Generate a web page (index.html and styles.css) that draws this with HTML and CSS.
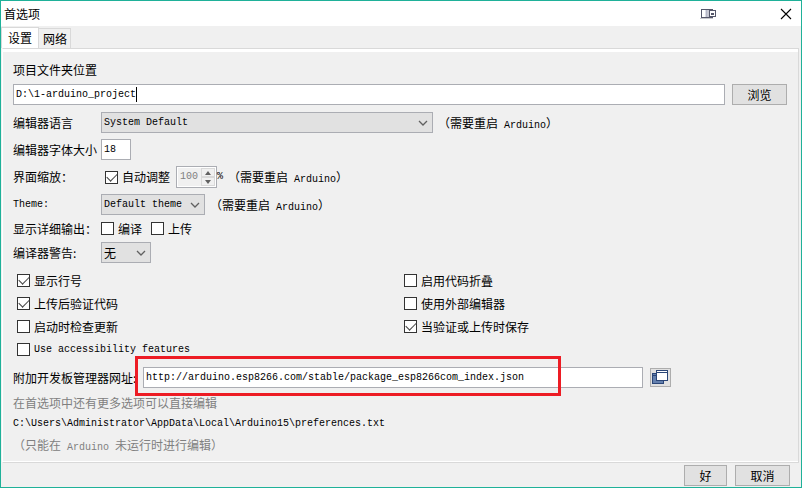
FILE: index.html
```html
<!DOCTYPE html>
<html lang="zh-CN">
<head>
<meta charset="utf-8">
<title>首选项</title>
<link rel="stylesheet" href="styles.css">
</head>
<body>
<main class="window">
  <header class="titlebar">
    <h1 class="title">首选项</h1>
    <svg class="dock-icon" width="16" height="11" viewBox="0 0 16 11" aria-hidden="true">
      <path d="M0 10.5h13" stroke="#c9c9cd"/>
      <rect x="1.5" y="1.5" width="11" height="8" fill="#fff" stroke="#55576a"/>
      <path d="M5.5 2v7" stroke="#dcdde6"/><path d="M6.5 2v7" stroke="#b4b6c6"/><path d="M8 2v7" stroke="#8d90a5"/>
      <rect x="9.5" y="2.5" width="6" height="6" fill="#fff" stroke="#55576a"/>
      <path d="M11 5h3v2h-3z" fill="#55576a"/>
    </svg>
    <button class="close" type="button" aria-label="关闭">
      <svg width="12" height="12" viewBox="0 0 12 12"><path d="M1 1l10 10M11 1L1 11" stroke="#000" stroke-width="1.1"/></svg>
    </button>
  </header>

  <nav class="tabs" role="tablist">
    <button class="tab active" type="button" role="tab" aria-selected="true">设置</button>
    <button class="tab" type="button" role="tab" aria-selected="false">网络</button>
  </nav>

  <form class="panel" id="prefs">
    <div class="row heading"><label for="path">项目文件夹位置</label></div>
    <div class="row path-row">
      <div class="path-field">
        <input class="field" id="path" type="text" value="D:\1-arduino_project">
        <span class="caret"></span>
      </div>
      <button class="btn browse" type="button">浏览</button>
    </div>

    <div class="row">
      <label class="name" for="language">编辑器语言</label>
      <span class="select wide">
        <select id="language"><option>System Default</option></select>
        <svg width="10" height="6" viewBox="0 0 10 6"><path d="M1 1l4 4 4-4"/></svg>
      </span>
      <span class="hint">（需要重启<span class="latin"> Arduino</span>）</span>
    </div>

    <div class="row">
      <label class="name" for="size">编辑器字体大小</label>
      <input class="field size" id="size" type="text" value="18">
    </div>

    <div class="row scale-row">
      <span class="name">界面缩放：</span>
      <label class="check indent"><input type="checkbox" checked>自动调整</label>
      <span class="spinner">
        <input type="text" value="100" aria-label="界面缩放" disabled>
        <span class="steps">
          <button type="button" aria-label="增加" disabled><svg width="6" height="4" viewBox="0 0 6 4"><path d="M3 0l3 4H0z"/></svg></button>
          <button type="button" aria-label="减少" disabled><svg width="6" height="4" viewBox="0 0 6 4"><path d="M0 0h6L3 4z"/></svg></button>
        </span>
      </span>
      <span class="latin">%</span>
      <span class="hint">（需要重启<span class="latin"> Arduino</span>）</span>
    </div>

    <div class="row">
      <label class="name latin" for="theme">Theme:</label>
      <span class="select theme">
        <select id="theme"><option>Default theme</option></select>
        <svg width="10" height="6" viewBox="0 0 10 6"><path d="M1 1l4 4 4-4"/></svg>
      </span>
      <span class="hint">（需要重启<span class="latin"> Arduino</span>）</span>
    </div>

    <div class="row verbose">
      <span class="name">显示详细输出：</span>
      <label class="check"><input type="checkbox">编译</label>
      <label class="check"><input type="checkbox">上传</label>
    </div>

    <div class="row">
      <label class="name" for="warnings">编译器警告:</label>
      <span class="select warnings">
        <select id="warnings"><option>无</option></select>
        <svg width="10" height="6" viewBox="0 0 10 6"><path d="M1 1l4 4 4-4"/></svg>
      </span>
    </div>

    <div class="options">
      <label class="check"><input type="checkbox" checked>显示行号</label>
      <label class="check"><input type="checkbox">启用代码折叠</label>
      <label class="check"><input type="checkbox" checked>上传后验证代码</label>
      <label class="check"><input type="checkbox">使用外部编辑器</label>
      <label class="check"><input type="checkbox">启动时检查更新</label>
      <label class="check"><input type="checkbox" checked>当验证或上传时保存</label>
      <label class="check"><input type="checkbox"><span class="latin">Use accessibility features</span></label>
    </div>

    <div class="row url-row">
      <label class="url-name" for="urls">附加开发板管理器网址:</label>
      <input class="field url" id="urls" type="text" value="http://arduino.esp8266.com/stable/package_esp8266com_index.json">
      <button class="btn expand" type="button" aria-label="打开网址列表">
        <svg width="17" height="15" viewBox="0 0 17 15">
          <rect x="0.5" y="3.5" width="11" height="10" fill="#6480ae" stroke="#2b4677"/>
          <path d="M1 5.5h11" stroke="#2b4677"/>
          <rect x="4.5" y="0.5" width="11" height="10" fill="#fff" stroke="#2b4677"/>
          <path d="M4 2.5h12" stroke="#2b4677"/>
        </svg>
      </button>
      <span class="highlight"></span>
    </div>

    <div class="notes">
      <p class="muted">在首选项中还有更多选项可以直接编辑</p>
      <p class="latin">C:\Users\Administrator\AppData\Local\Arduino15\preferences.txt</p>
      <p class="muted">（只能在<span class="latin"> Arduino </span>未运行时进行编辑）</p>
    </div>
  </form>

  <footer class="actions">
    <button class="btn ok" type="submit" form="prefs">好</button>
    <button class="btn cancel" type="button">取消</button>
  </footer>
</main>
</body>
</html>
```
FILE: styles.css
```css
* {
  box-sizing: border-box;
}

body {
  margin: 0;
  background: #f0f0f0;
  color: #000;
  font: 12px/20px "Noto Sans CJK SC", sans-serif;
}

button,
input,
select {
  margin: 0;
  color: inherit;
  font: inherit;
}

.latin,
.field,
.spinner input,
#language,
#theme {
  font-family: "Liberation Mono", "Noto Sans CJK SC", monospace;
  font-size: 10px;
}

.window {
  display: flex;
  flex-direction: column;
  min-height: 100vh;
  border: 1px solid #1fb199;
}

.titlebar {
  display: flex;
  align-items: center;
  height: 25px;
  padding: 0 9px 0 3px;
  background: #fff;
}

.title {
  flex: 1;
  margin: 0;
  font-size: 12px;
  font-weight: 400;
  line-height: 18px;
}

.dock-icon {
  margin-right: 64px;
}

.close {
  display: flex;
  padding: 0;
  border: 0;
  background: none;
}

.tabs {
  display: flex;
  align-items: flex-end;
  height: 22px;
}

.tab {
  height: 20px;
  padding: 0 3px 0 4px;
  border: 1px solid #d9d9d9;
  border-width: 1px 1px 0 0;
  background: #f0f0f0;
  line-height: 18px;
}

.tab.active {
  height: 21px;
  padding: 0 6px;
  border-left-width: 1px;
  background: #fff;
}

.panel {
  display: flex;
  flex: 1;
  flex-direction: column;
  gap: 6px;
  margin: 0 2px 0 1px;
  padding: 8px 11px 6px 10px;
  border: 1px solid #d9d9d9;
  border-left-color: #fff;
  box-shadow: inset 0 3px #fff, inset 0 -1px #fff;
}

.row {
  display: flex;
  align-items: center;
  height: 21px;
}

.heading {
  height: 22px;
  padding-top: 4px;
}

.path-row {
  gap: 7px;
  margin: -1px 0 1px;
}

.path-field {
  position: relative;
  flex: 1;
  display: flex;
}

.caret {
  position: absolute;
  top: 3px;
  left: 123px;
  width: 1px;
  height: 15px;
  background: #000;
}

.name {
  width: 88px;
  white-space: nowrap;
}

.field {
  width: 100%;
  height: 21px;
  padding: 0 2px;
  border: 1px solid #abadb3;
  border-radius: 0;
  background: #fff;
  line-height: 15px;
}

.size {
  width: 30px;
}

.btn {
  height: 21px;
  padding: 0;
  border: 1px solid #adadad;
  background: #e1e1e1;
  line-height: 18px;
}

.browse,
.cancel {
  width: 55px;
}

.ok {
  width: 43px;
}

.select {
  position: relative;
  display: flex;
}

.select select {
  width: 100%;
  height: 21px;
  padding: 0 20px 0 2px;
  border: 1px solid #abadb3;
  border-radius: 0;
  background: #e1e1e1;
  appearance: none;
}

.select svg {
  position: absolute;
  top: 8px;
  right: 5px;
  fill: none;
  stroke: #606060;
  stroke-width: 1.3;
  pointer-events: none;
}

.wide {
  width: 332px;
}

.theme {
  width: 104px;
}

.warnings {
  width: 50px;
}

.hint {
  margin-left: 5px;
  white-space: nowrap;
}

.hint .latin,
.muted .latin {
  line-height: 1;
}

.check {
  display: flex;
  align-items: center;
  gap: 4px;
}

.check input {
  width: 13px;
  height: 13px;
  border: 1px solid #333;
  background: #fff;
  appearance: none;
}

.check input:checked::before {
  content: "";
  display: block;
  width: 9px;
  height: 5px;
  margin: 1px;
  border: solid #444;
  border-width: 0 0 1px 1px;
  transform: rotate(-45deg);
}

.scale-row {
  height: 22px;
}

.indent {
  margin: 0 6px 0 4px;
}

.spinner {
  display: flex;
  width: 41px;
  height: 22px;
  padding: 1px;
  border: 1px solid #abadb3;
  background: #fff;
}

.spinner input {
  width: 23px;
  padding: 0 0 0 2px;
  border: 0;
  background: #f0f0f0;
  color: #808080;
}

.steps {
  display: flex;
  flex: 1;
  flex-direction: column;
}

.steps button {
  display: flex;
  flex: 1;
  align-items: center;
  justify-content: center;
  padding: 0;
  border: 1px solid #d9d9d9;
  background: #f0f0f0;
}

.steps svg {
  fill: #606060;
}

.verbose {
  gap: 9px;
  height: 15px;
}

.verbose .name {
  width: 79px;
}

.options {
  display: grid;
  grid-template-columns: 1fr 1fr;
  grid-auto-rows: 23px;
  column-gap: 4px;
  padding-left: 4px;
}

.url-row {
  position: relative;
}

.url-name {
  width: 130px;
  white-space: nowrap;
}

.url {
  width: 500px;
}

.expand {
  display: flex;
  align-items: center;
  justify-content: center;
  width: 21px;
  height: 19px;
  margin-left: 7px;
}

.expand svg {
  flex: none;
}

.highlight {
  position: absolute;
  top: -11px;
  left: 122px;
  width: 426px;
  height: 40px;
  border: 3px solid #ed1c24;
  pointer-events: none;
}

.notes p {
  height: 21px;
  margin: 0;
  line-height: 21px;
}

.notes {
  margin-top: -2px;
}

.muted {
  color: #808080;
}

.actions {
  display: flex;
  justify-content: flex-end;
  gap: 8px;
  padding: 2px 11px 1px;
}
```
